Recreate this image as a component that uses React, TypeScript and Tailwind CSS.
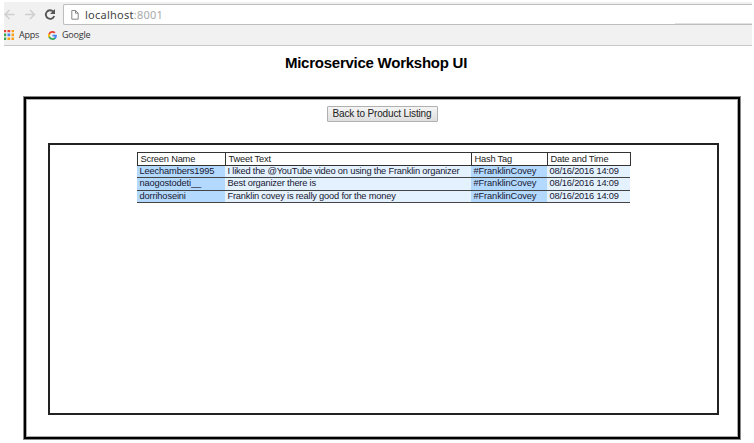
import React from "react";

const rows = [
  ["Leechambers1995", "I liked the @YouTube video on using the Franklin organizer", "#FranklinCovey", "08/16/2016 14:09"],
  ["naogostodeti__", "Best organizer there is", "#FranklinCovey", "08/16/2016 14:09"],
  ["dorrihoseini", "Franklin covey is really good for the money", "#FranklinCovey", "08/16/2016 14:09"],
];
const rowHeights = ["h-[12px]", "h-[13px]", "h-[12px]"];
const cols = "grid grid-cols-[88px_246px_76px_83px]";
const tracking = ["tracking-[-0.15px]", "tracking-[-0.2px]", "tracking-[-0.13px]", "tracking-[-0.2px]"];
const dots = ["#ea4335", "#ea4335", "#f9a01b", "#34a853", "#4285f4", "#f9a01b", "#34a853", "#f9a01b", "#f9a01b"];

function Browser() {
  return (
    <div className="ml-1 mr-[2px] mt-[2px] flex h-[44px] flex-col border-b border-[#c8c8c8] bg-[#f1f1f1] font-['Open_Sans',sans-serif]">
      <div className="flex h-[23px] items-start">
        <svg width="59" height="23" fill="none">
          <g stroke="#cfcfcf" strokeWidth="1.5">
            <path d="M10.5 12.5H1M5.5 8 1 12.5 5.5 17" />
            <path d="M21 12.5h9.5M26 8l4.5 4.5L26 17" />
          </g>
          <path d="M49.2 9.5A4.3 4.3 0 1 0 50.2 14" stroke="#555" strokeWidth="1.8" />
          <path d="M51 7v5h-5z" fill="#555" />
        </svg>
        <div className="mt-[2px] flex h-[21px] flex-1 items-center rounded-l-[2px] border border-r-0 border-[#bdbdbd] bg-white pl-[7px]">
          <svg width="8" height="11" viewBox="0 0 8 11" fill="none" stroke="#888">
            <path d="M.8 1.5h3.7l2.7 2.7v6H.8zM4.5 1.5v2.7h2.7" />
          </svg>
          <span className="ml-[6px] whitespace-pre pt-px font-['Noto_Sans',sans-serif] text-[11px] leading-[16px] tracking-[0.25px] text-[#444]">
            localhost<span className="text-[#aaa]">:8001</span>
          </span>
          <span className="ml-auto h-px w-[77px] self-end bg-[#e2e2e2]" />
        </div>
      </div>
      <div className="flex h-[20px] items-center text-[9px] leading-[12px] tracking-[-0.2px] text-[#333]">
        <svg width="10" height="10" className="shrink-0">
          {dots.map((c, i) => (
            <rect key={i} x={(i % 3) * 4 - 0.5} y={Math.floor(i / 3) * 4 - 0.5} width="2.7" height="2.7" fill={c} />
          ))}
        </svg>
        <span className="ml-[5px] w-[25px]">Apps</span>
        <svg width="9" height="9" viewBox="0 0 18 18" className="ml-[4px]">
          <path fill="#4285F4" d="M17.64 9.2c0-.64-.06-1.25-.16-1.84H9v3.48h4.84a4.14 4.14 0 0 1-1.8 2.72v2.26h2.91c1.7-1.57 2.69-3.88 2.69-6.62z" />
          <path fill="#34A853" d="M9 18c2.43 0 4.47-.8 5.96-2.18l-2.91-2.26c-.81.54-1.84.86-3.05.86-2.35 0-4.33-1.58-5.04-3.71H.96v2.33A9 9 0 0 0 9 18z" />
          <path fill="#FBBC05" d="M3.96 10.71a5.4 5.4 0 0 1 0-3.42V4.96H.96a9 9 0 0 0 0 8.08z" />
          <path fill="#EA4335" d="M9 3.58c1.32 0 2.51.45 3.44 1.35l2.58-2.58A9 9 0 0 0 .96 4.96l3 2.33C4.67 5.16 6.65 3.58 9 3.58z" />
        </svg>
        <span className="ml-[5px]">Google</span>
      </div>
    </div>
  );
}

export default function App() {
  return (
    <div className="flex h-[443px] w-[754px] flex-col overflow-hidden bg-white font-['Liberation_Sans',Arial,sans-serif] text-black">
      <Browser />
      <h1 className="mt-[8px] h-[42px] pr-[2px] text-center text-[15px] font-bold leading-[18px] tracking-[-0.25px]">Microservice Workshop UI</h1>
      <main className="ml-[23px] h-[344px] w-[718px] border border-[#888]">
        <div className="h-full border-2 border-black">
          <div className="flex h-full flex-col items-center border border-[#aaa]">
            <button className="mt-[6px] flex h-[16px] w-[111px] shrink-0 items-center justify-center whitespace-nowrap rounded-[1px] border border-[#b0b0b0] bg-linear-to-b from-[#f5f5f5] to-[#dedede] text-[10px] leading-[12px] tracking-[-0.15px] text-[#222]">
              Back to Product Listing
            </button>
            <section className="ml-[3px] mt-[21px] h-[272px] w-[671px] shrink-0 border-2 border-[#222] pl-[87px] pt-[7px] text-[9.3px] leading-[11px] text-[#181830]">
              <div className={`${cols} h-[14px] w-[494px] border border-[#333] text-[#222]`}>
                {["Screen Name", "Tweet Text", "Hash Tag", "Date and Time"].map((t) => (
                  <div key={t} className="whitespace-nowrap border-r border-[#333] pl-[2.5px] pt-px tracking-[-0.2px] last:border-r-0">{t}</div>
                ))}
              </div>
              {rows.map((r, i) => (
                <div key={r[0]} className={`${cols} ${rowHeights[i]} w-[493px] border-b border-[#444] bg-[#e4f1ff]`}>
                  {r.map((t, j) => (
                    <div key={j} className={`whitespace-nowrap pl-[2.5px] ${tracking[j]} ${j % 2 === 0 ? "bg-[#b3d9ff]" : ""}`}>{t}</div>
                  ))}
                </div>
              ))}
            </section>
          </div>
        </div>
      </main>
    </div>
  );
}
